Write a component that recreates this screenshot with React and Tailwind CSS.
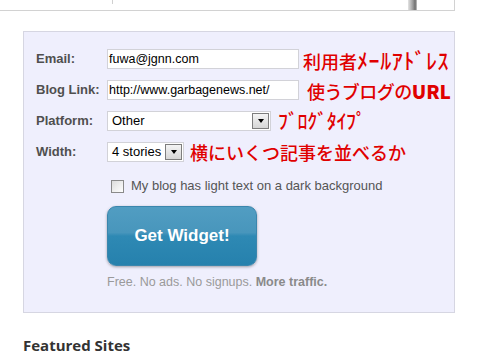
const label = 'w-[71px] shrink-0 text-[13px] font-bold text-[#4f4f4f]'
const note = 'text-[18px] font-medium leading-none text-[#e00000] whitespace-nowrap'
const jp = { fontFamily: '"Noto Sans CJK JP", sans-serif' }

function SelectBox({ value, width }) {
  return (
    <div className={`flex h-[20px] items-center justify-between border border-[#d2d2d8] bg-white pl-[4px] pr-[1px] ${width}`}>
      <span className="text-[13px] text-black">{value}</span>
      <span className="flex h-[16px] w-[17px] items-center justify-center border border-[#7d7d7d] bg-[linear-gradient(180deg,#f4f4f4,#d6d6d6)]">
        <span className="h-0 w-0 border-x-[3.5px] border-t-[4px] border-x-transparent border-t-black" />
      </span>
    </div>
  )
}

export default function App() {
  return (
    <div className="h-[360px] w-[480px] overflow-hidden bg-white" style={{ fontFamily: '"Liberation Sans", Arial, sans-serif' }}>
      <div className="flex h-[11px] w-[455px] border-r border-b border-[#d2d2d2]">
        <div className="w-[112px]" />
        <div className="h-[4px] w-px bg-[#d0d0d0]" />
        <div className="flex-1" />
        <div className="w-[9px] bg-[linear-gradient(90deg,#e4e4e4,#9a9a9a_55%,#6e6e6e_80%,#c8c8c8)]" />
        <div className="w-[37px]" />
      </div>

      <div className="mt-[20px] ml-[23px] h-[282px] w-[432px] border border-[#d6d6e2] bg-[#efeffd] pt-[17px] pl-[12px]">
        <div className="flex flex-col gap-[11px]">
          <div className="flex h-[20px] items-center">
            <span className={label}>Email:</span>
            <div className="flex h-[20px] w-[192px] items-center border border-[#d2d2d8] bg-white pl-[1px] text-[12.5px] text-black">fuwa@jgnn.com</div>
            <span className={`${note} ml-[4px] flex items-end`} style={jp}>
              利用者<span className="text-[22px] leading-none tracking-[0.6px]">ﾒｰﾙｱﾄﾞﾚｽ</span>
            </span>
          </div>
          <div className="flex h-[20px] items-center">
            <span className={label}>Blog Link:</span>
            <div className="flex h-[20px] w-[192px] items-center border border-[#d2d2d8] bg-white pl-[1px] text-[12.5px] text-black">http://www.garbagenews.net/</div>
            <span className={`${note} ml-[8px]`} style={jp}>
              <span className="tracking-[-0.5px]">使うブログの</span>
              <span className="text-[19px] font-black">URL</span>
            </span>
          </div>
          <div className="flex h-[20px] items-center">
            <span className={label}>Platform:</span>
            <SelectBox value="Other" width="w-[164px]" />
            <span className={`${note} ml-[7px] text-[20px] tracking-[-0.4px]`} style={jp}>ﾌﾞﾛｸﾞﾀｲﾌﾟ</span>
          </div>
          <div className="flex h-[20px] items-center">
            <span className={label}>Width:</span>
            <SelectBox value="4 stories" width="w-[77px]" />
            <span className={`${note} ml-[6px]`} style={jp}>横にいくつ記事を並べるか</span>
          </div>
        </div>

        <div className="mt-[16px] flex h-[16px] items-center pl-[75px]">
          <span className="h-[13px] w-[13px] border border-[#8a8a8a] bg-[linear-gradient(135deg,#dcdcdc,#ffffff)]" />
          <span className="ml-[7px] text-[13px] text-[#555]">My blog has light text on a dark background</span>
        </div>

        <div className="mt-[12px] pl-[71px]">
          <button className="flex h-[60px] w-[150px] items-center justify-center rounded-[9px] border border-[#3a86ad] bg-[linear-gradient(180deg,#519dc2_0%,#4896bc_44%,#2e89b4_50%,#2681ad_100%)] text-[17px] font-bold text-white shadow-[0_1px_3px_rgba(0,0,0,0.35)]">
            Get Widget!
          </button>
          <p className="mt-[8px] text-[12.5px] leading-[16px] text-[#9a9a9a]">
            Free. No ads. No signups. <span className="font-bold text-[#8a8a8a]">More traffic.</span>
          </p>
        </div>
      </div>

      <h2 className="mt-[21px] ml-[23px] text-[15px] font-bold text-[#333]" style={{ fontFamily: '"Open Sans", sans-serif' }}>
        Featured Sites
      </h2>
    </div>
  )
}
